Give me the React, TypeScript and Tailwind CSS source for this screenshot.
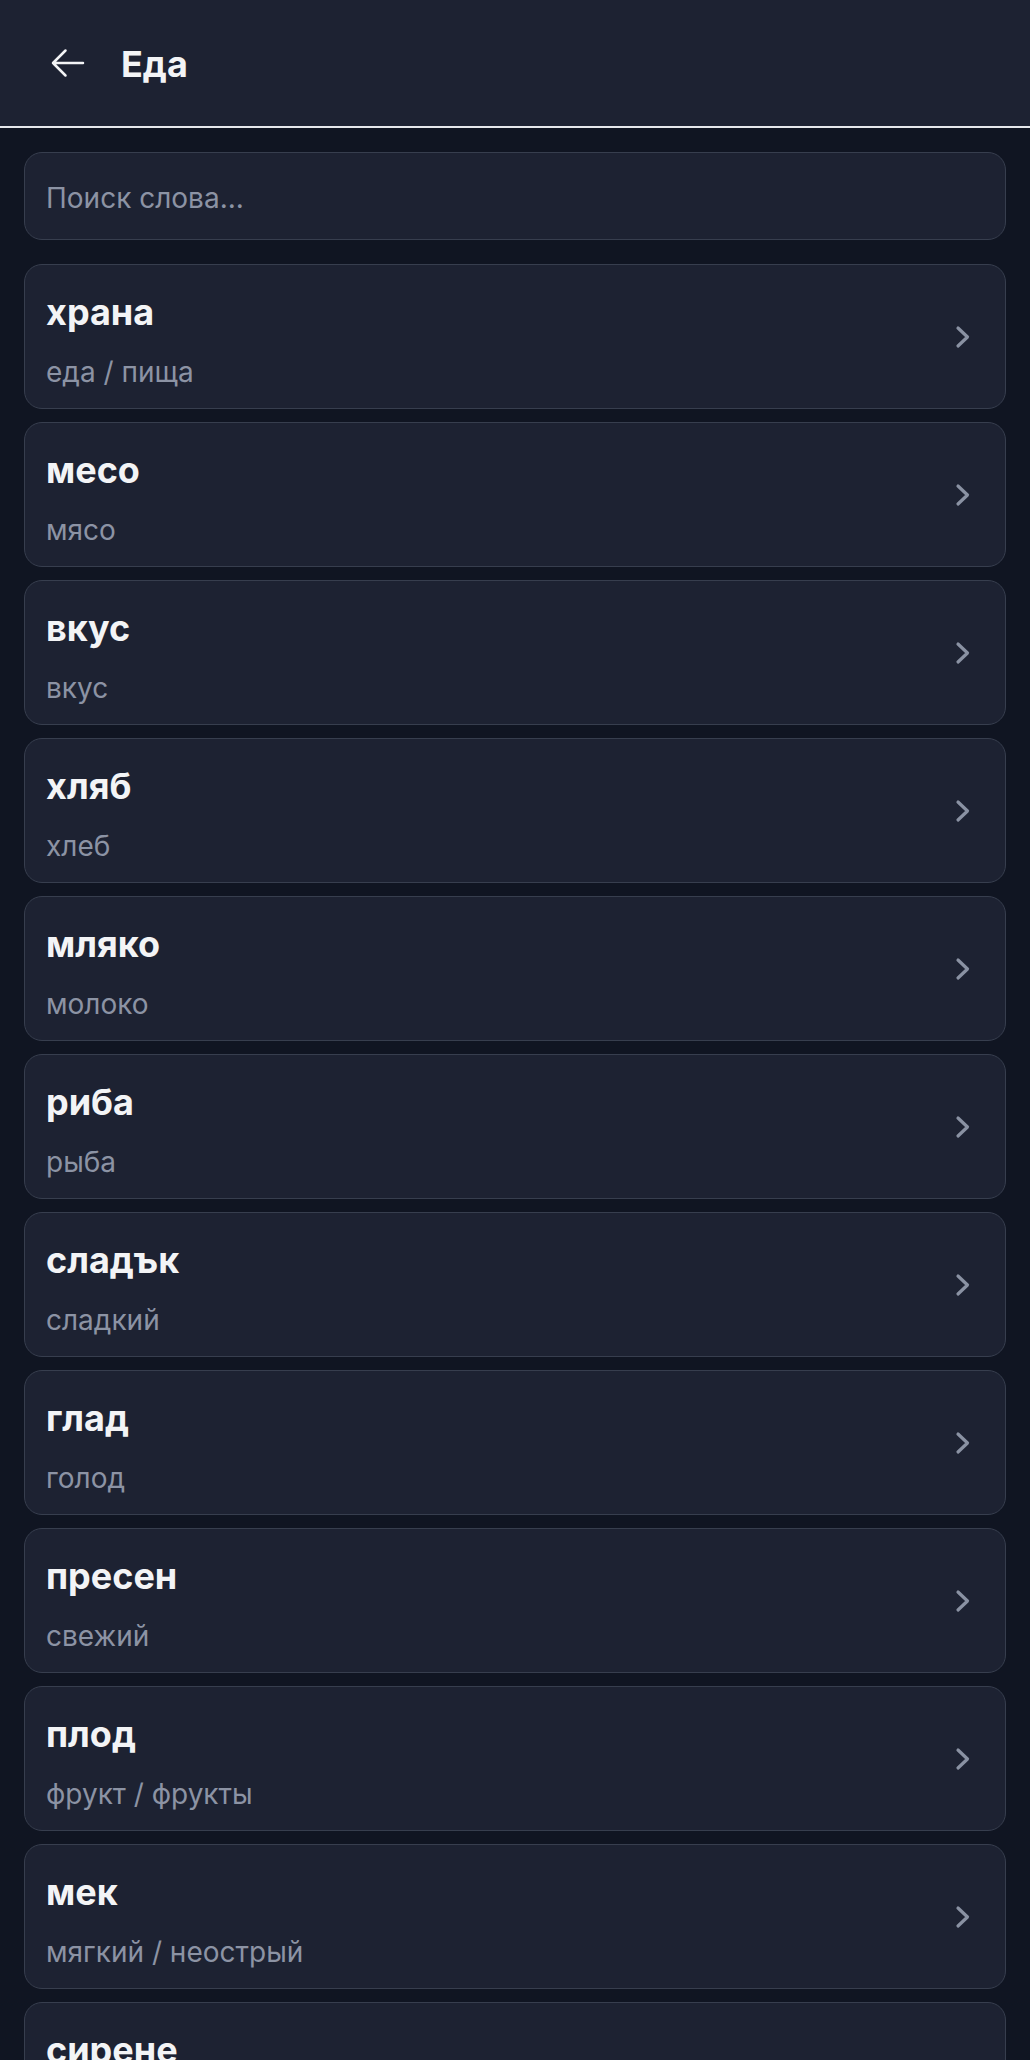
import React from "react";

const words: { bg: string; ru: string }[] = [
  { bg: "храна", ru: "еда / пища" },
  { bg: "месо", ru: "мясо" },
  { bg: "вкус", ru: "вкус" },
  { bg: "хляб", ru: "хлеб" },
  { bg: "мляко", ru: "молоко" },
  { bg: "риба", ru: "рыба" },
  { bg: "сладък", ru: "сладкий" },
  { bg: "глад", ru: "голод" },
  { bg: "пресен", ru: "свежий" },
  { bg: "плод", ru: "фрукт / фрукты" },
  { bg: "мек", ru: "мягкий / неострый" },
  { bg: "сирене", ru: "сыр" },
];

function Chevron() {
  return (
    <svg width="16" height="24" viewBox="0 0 16 24" fill="none" className="shrink-0 self-center">
      <polyline
        points="3,3 12.5,12 3,21"
        stroke="#8a92a3"
        strokeWidth="3.2"
        strokeLinecap="round"
        strokeLinejoin="round"
      />
    </svg>
  );
}

export default function App() {
  return (
    <div
      className="h-[2060px] overflow-hidden bg-[#101522] text-[#f3f4f6]"
      style={{ fontFamily: "Inter, 'Noto Sans', sans-serif" }}
    >
      <header className="h-[128px] bg-[#1d2232] border-b-2 border-[#e5e7eb] flex items-center pl-[48px]">
        <svg width="40" height="40" viewBox="0 0 24 24" fill="none" stroke="#f3f4f6" strokeWidth="1.5" strokeLinecap="round" strokeLinejoin="round">
          <path d="M10.5 19.5 3 12l7.5-7.5M3 12h18" />
        </svg>
        <h1 className="ml-[33px] mt-[2px] text-[36px] font-bold leading-none">Еда</h1>
      </header>
      <main className="px-[24px] pt-[24px] flex flex-col">
        <div className="h-[88px] rounded-[18px] border border-[#373e4e] bg-[#1d2232] flex items-center px-[21px] pt-[4px]">
          <span className="text-[28px] text-[#8c93a4]">Поиск слова...</span>
        </div>
        <div className="mt-[24px] flex flex-col gap-[13px]">
          {words.map((w) => (
            <div
              key={w.bg}
              className="h-[145px] shrink-0 rounded-[18px] border border-[#373e4e] bg-[#1d2232] flex items-start justify-between pl-[21px] pr-[34px] pt-[26px]"
            >
              <div className="flex flex-col">
                <div className="text-[36px] font-bold leading-[43px] text-[#f3f4f6]">{w.bg}</div>
                <div className="mt-[17px] text-[28px] leading-[42px] text-[#8c93a4]">{w.ru}</div>
              </div>
              <div className="self-stretch -mt-[26px] flex items-center">
                <Chevron />
              </div>
            </div>
          ))}
        </div>
      </main>
    </div>
  );
}
